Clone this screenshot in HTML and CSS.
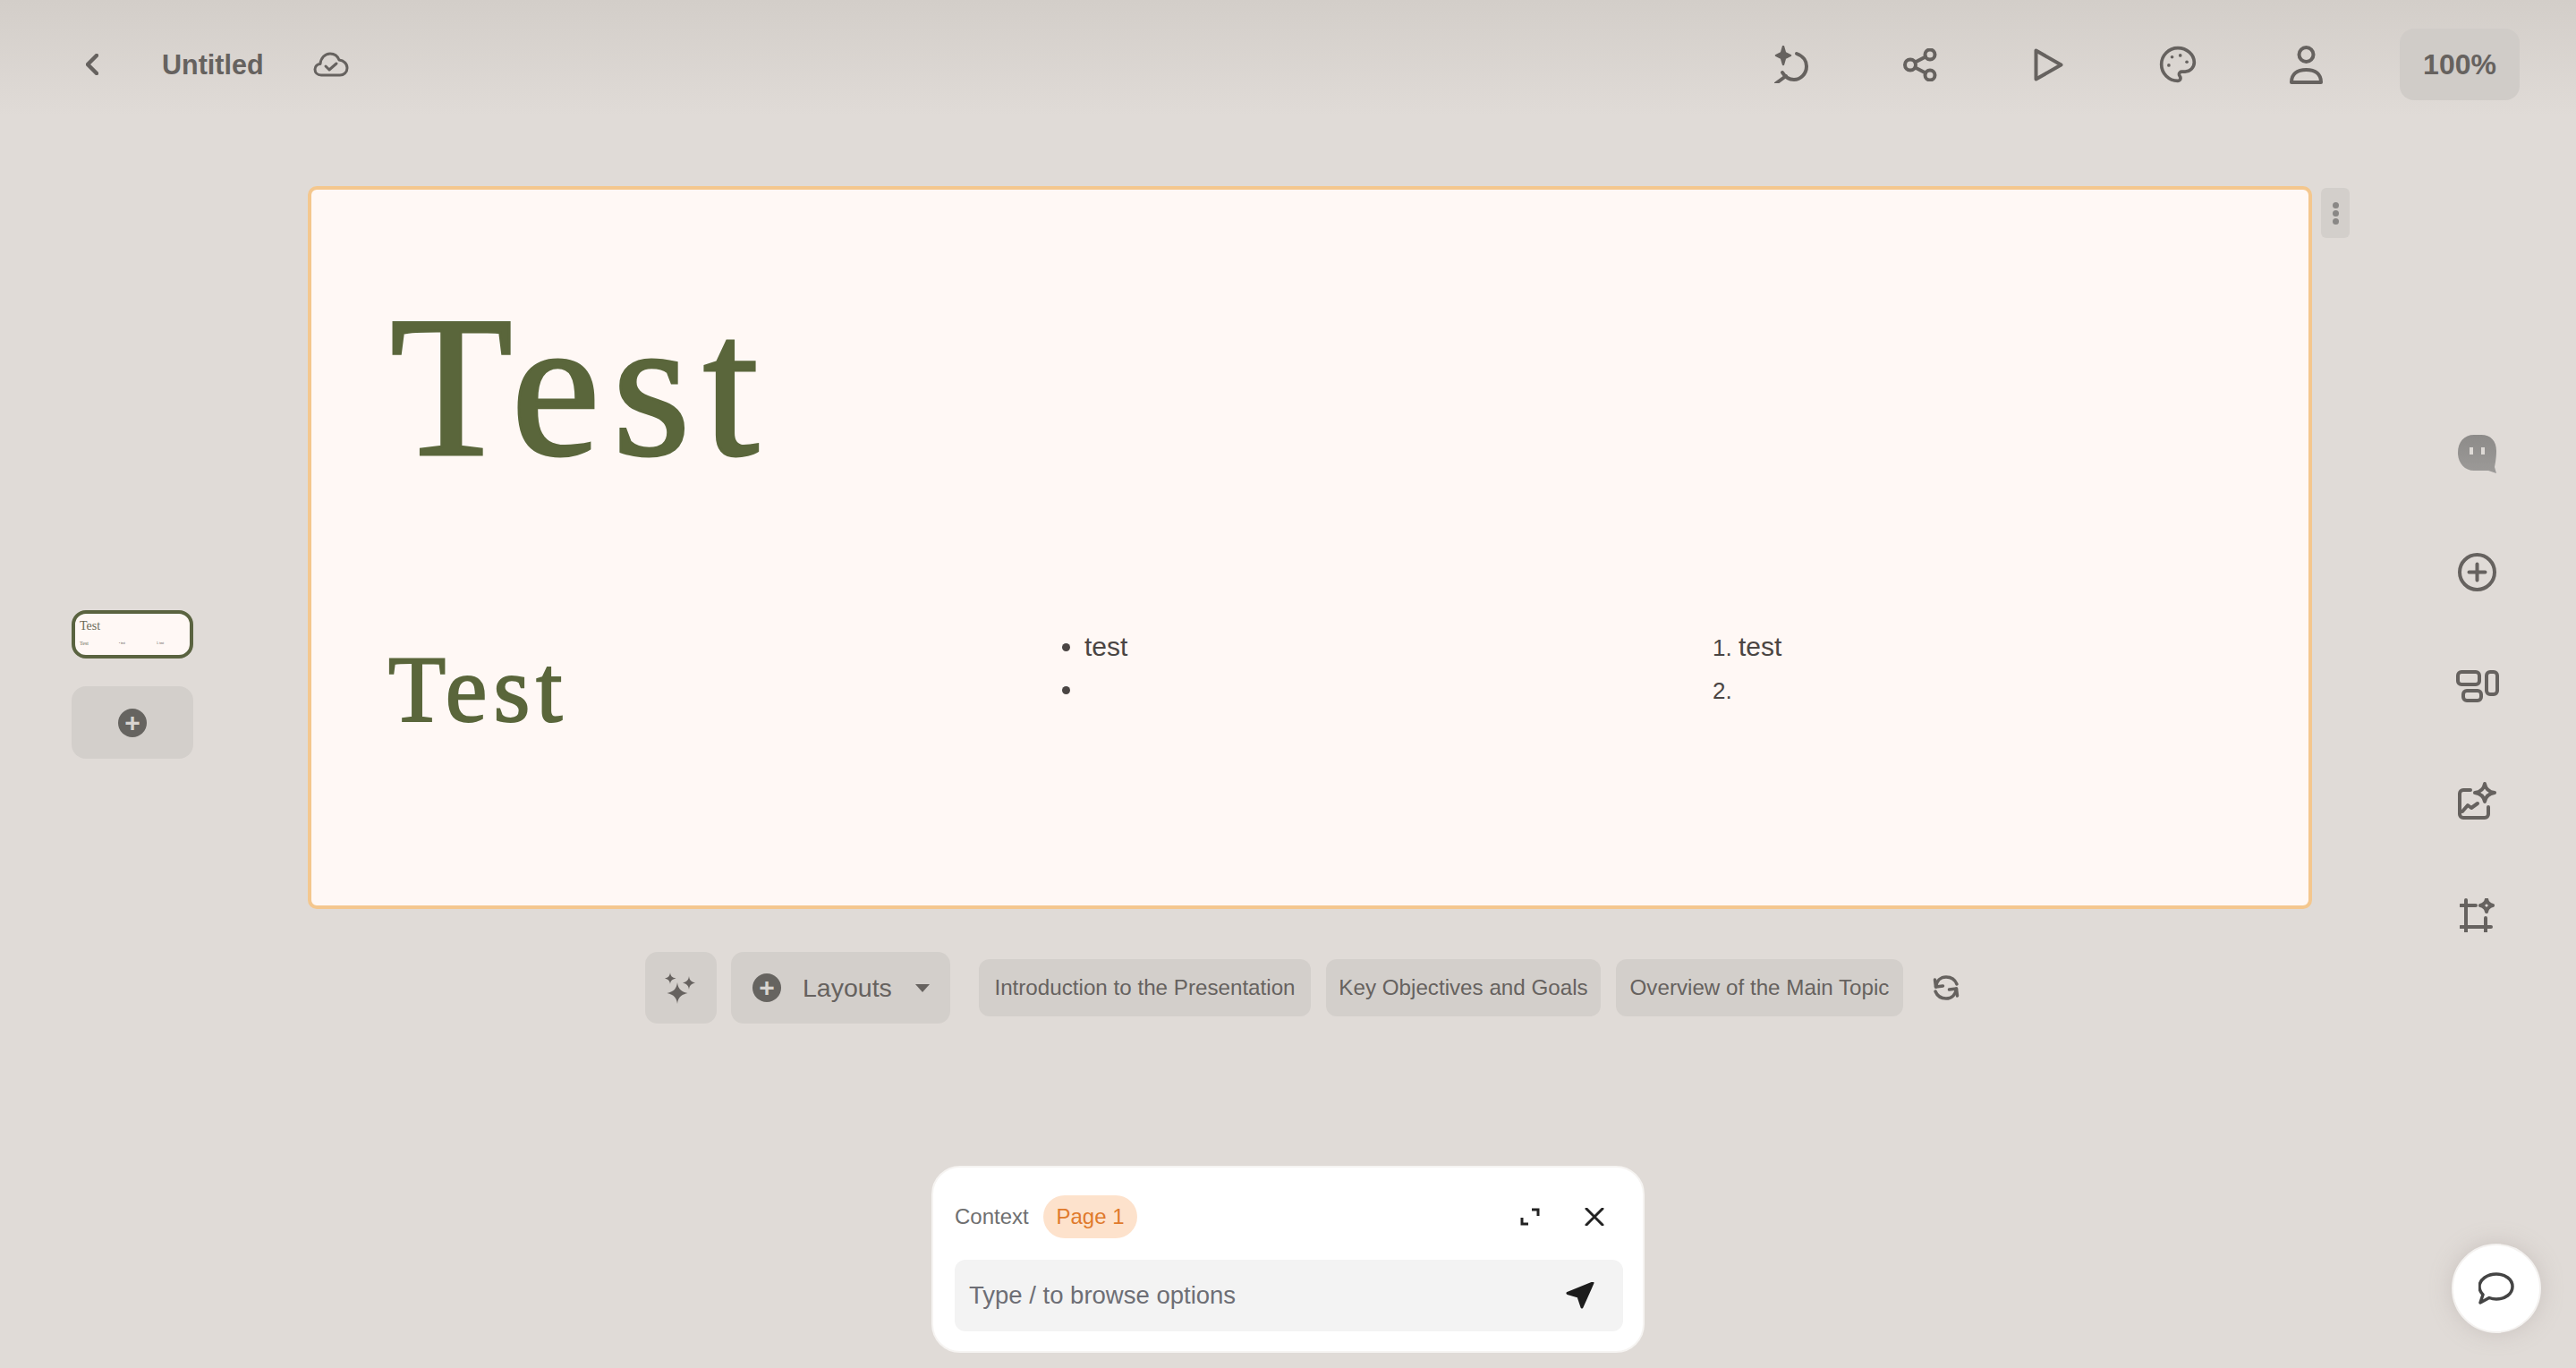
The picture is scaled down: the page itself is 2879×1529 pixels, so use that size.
FILE: index.html
```html
<!DOCTYPE html>
<html lang="en">
<head>
<meta charset="utf-8">
<title>Untitled</title>
<link rel="stylesheet" href="styles.css">
</head>
<body>
<div class="app">
  <header class="topbar">
    <div class="top-left">
      <svg class="i-back" viewBox="0 0 14 24"><polyline points="12,2 2,12 12,22"/></svg>
      <span class="doc-title">Untitled</span>
      <svg class="i-cloud" viewBox="0 0 40 28"><path d="M9 26C4.500 26 2 23 2 19.500 2 16 5 13.500 8 13.500 8.500 7 13 2 19 2c5 0 8.500 3 10 7 5 .5 9 4 9 9 0 5-4 8-8 8Z"/><path d="M14 16l4 4 8-7"/></svg>
    </div>
    <div class="top-right">
      <svg class="i-undo" viewBox="0 0 38 42"><path d="M25 9c8 3 11 9 11 14 0 9-7 15-14 15-6 0-10-3-13-8"/><path d="M13 34 2 42"/><path class="fill thin" d="M10 1l2 7 6 3-6 3-2 7-2-7-6-3 6-3Z"/></svg>
      <svg class="i-share" viewBox="0 0 38 37"><circle cx="8" cy="18.500" r="6"/><circle cx="30" cy="7" r="5.500"/><circle cx="30" cy="30" r="5.500"/><path d="M13.500 15.500 25 9.500M13.500 21.500 25 27.500"/></svg>
      <svg class="i-play" viewBox="0 0 33 37"><path d="M2.500 2.500v32l28-16Z"/></svg>
      <svg class="i-palette" viewBox="0 0 24 24"><path d="M12 2C6.500 2 2 6.500 2 12s4.500 10 10 10c.926 0 1.648-.746 1.648-1.688 0-.437-.18-.835-.437-1.125-.29-.289-.438-.652-.438-1.125a1.640 1.640 0 0 1 1.668-1.668h1.996c3.051 0 5.555-2.503 5.555-5.554C21.965 6.012 17.461 2 12 2z"/><circle class="fill dot" cx="13.500" cy="6.500" r="1"/><circle class="fill dot" cx="17.500" cy="10.500" r="1"/><circle class="fill dot" cx="8.500" cy="7.500" r="1"/><circle class="fill dot" cx="6.500" cy="12.500" r="1"/></svg>
      <svg class="i-user" viewBox="0 0 39 43"><circle cx="19.500" cy="10" r="8"/><path d="M3 41c0-9 6-14 16.500-14S36 32 36 41Z"/></svg>
      <div class="zoom-box">100%</div>
    </div>
  </header>

  <div class="workspace">
    <aside class="left-rail">
      <div class="thumb">
        <div class="thumb-title">Test</div>
        <div class="thumb-row">
          <span class="thumb-sub">Test</span>
          <span class="thumb-li">• test</span>
          <span class="thumb-li">1. test</span>
        </div>
      </div>
      <button class="add-page"><span class="plus-dot">+</span></button>
    </aside>

    <main class="center">
      <div class="slide-wrap">
        <section class="slide">
          <h1 class="slide-title">Test</h1>
          <div class="slide-cols">
            <h2 class="slide-sub">Test</h2>
            <ul class="slide-ul"><li>test</li><li></li></ul>
            <ol class="slide-ol"><li>test</li><li></li></ol>
          </div>
        </section>
        <div class="handle"><i></i><i></i><i></i></div>
      </div>
      <div class="toolbar">
        <button class="tool tool-spark">
          <svg class="i-spark" viewBox="0 0 36 36"><path d="M14 12c1 7 3.500 10 11.500 12C17.500 26 15 29 14 36c-1-7-3.500-10-11.500-12C10.500 22 13 19 14 12Z"/><path d="M6 1c.5 4 2 5.500 6.500 6.500C8 8.500 6.500 10 6 14c-.5-4-2-5.500-6-6.500C4 6.500 5.500 5 6 1Z"/><path d="M27 5c.5 4.500 2.500 6.500 7 7.500-4.500 1-6.500 3-7 7.500-.5-4.500-2.500-6.500-7-7.500 4.500-1 6.500-3 7-7.500Z"/></svg>
        </button>
        <button class="tool tool-layouts">
          <span class="plus-dot">+</span>
          <span class="tool-label">Layouts</span>
          <span class="caret"></span>
        </button>
        <div class="chips">
          <button class="chip chip-intro">Introduction to the Presentation</button>
          <button class="chip chip-key">Key Objectives and Goals</button>
          <button class="chip chip-over">Overview of the Main Topic</button>
          <svg class="i-refresh" viewBox="0 0 30 28"><path d="M3.500 13C4.500 6 9 2 15 2c6 0 10 3 12 8"/><path d="M2.500 5l1 8 8-1"/><path d="M26.500 15C25.500 22 21 26 15 26 9 26 5 23 3 18"/><path d="M27.500 23l-1-8-8 1"/></svg>
        </div>
      </div>
    </main>

    <aside class="right-rail">
      <div class="rail-slot first">
        <svg class="i-bubble" viewBox="0 0 44 43"><defs><linearGradient id="bubbleFill" x1="0" y1="0" x2="0" y2="1"><stop offset="0" stop-color="#8d8b89"/><stop offset="1" stop-color="#9c9a98"/></linearGradient></defs><path fill="url(#bubbleFill)" d="M18 0h8c11 0 17 7 17 18 0 7-1 13-2 18l2 7-9-3H18C7 40 0 31 0 20 0 8 7 0 18 0Z"/><rect x="13" y="14" width="4" height="8" fill="#dedad6"/><rect x="26" y="14" width="4" height="8" fill="#dedad6"/></svg>
      </div>
      <div class="rail-slot">
        <svg class="i-plus" viewBox="0 0 43 43"><circle cx="21.500" cy="21.500" r="19.500"/><path d="M21.500 12.500v18M12.500 21.500h18"/></svg>
      </div>
      <div class="rail-slot">
        <svg class="i-layout" viewBox="0 0 48 36"><rect x="2" y="2" width="24" height="14" rx="4"/><rect x="8" y="23" width="20" height="11" rx="4"/><rect x="34" y="2" width="12" height="25" rx="4"/></svg>
      </div>
      <div class="rail-slot">
        <svg class="i-chart" viewBox="0 0 43 42"><path d="M14 9H6a4 4 0 0 0-4 4v23a4 4 0 0 0 4 4h24a4 4 0 0 0 4-4v-8"/><path d="M5 33l6-7 4 3 7-5"/><path d="M30 2c1 6 4 9 11 10-7 1-10 4-11 10-1-6-4-9-11-10 7-1 10-4 11-10Z"/></svg>
      </div>
      <div class="rail-slot">
        <svg class="i-crop" viewBox="0 0 40 38"><path d="M7 2v36M1 8h17M1 32h34M29 22v16"/><path d="M30 1c.8 4 3 6.200 7 7-4 .8-6.200 3-7 7-.8-4-3-6.200-7-7 4-.8 6.200-3 7-7Z"/></svg>
      </div>
    </aside>
  </div>

  <section class="ai-panel">
    <div class="ai-head">
      <span class="ai-context">Context</span>
      <span class="ai-page">Page 1</span>
      <svg class="i-expand" viewBox="0 0 22 20"><path d="M13 2h7v7M2 11v7h7"/></svg>
      <svg class="i-close" viewBox="0 0 22 20"><path d="M2 1l18 18M20 1 2 19"/></svg>
    </div>
    <div class="ai-input">
      <span class="ai-placeholder">Type / to browse options</span>
      <svg class="i-send" viewBox="0 0 32 30"><path d="M30 1 2 12.500l12 3.500 4 12Z"/></svg>
    </div>
  </section>

  <button class="chat-fab">
    <svg class="i-chat" viewBox="0 0 40 36"><path d="M20 2c10 0 18 6 18 14s-8 14-18 14c-3 0-5.500-.5-8-1.500L2 34l3-9c-2.500-2.500-4-6-4-9C1 8 10 2 20 2Z"/></svg>
  </button>
</div>
</body>
</html>
```

FILE: styles.css
```css
* { box-sizing: border-box; }
html, body { margin: 0; padding: 0; }
body { font-family: "Liberation Sans", Arial, sans-serif; color: #66625f; overflow: hidden; }
button { font: inherit; color: inherit; border: 0; padding: 0; }
svg { display: block; flex: none; fill: none; stroke: #66625f; stroke-width: 4; stroke-linecap: round; stroke-linejoin: round; }
svg .fill { fill: #66625f; }
svg .thin { stroke-width: 2.500; }
svg .dot { stroke: none; }

.app {
  position: relative;
  width: 2879px;
  height: 1529px;
  overflow: hidden;
  background: linear-gradient(180deg, #d3cec9 0, #e0dbd7 130px, #e0dbd7 100%);
}

/* top bar */
.topbar { height: 144px; display: flex; justify-content: space-between; align-items: center; padding: 0 63px 0 96px; }
.top-left, .top-right { display: flex; align-items: center; }
.i-back { width: 14px; height: 24px; stroke-width: 4.500; }
.doc-title { margin-left: 71px; font-size: 30.500px; font-weight: 700; width: 169px; }
.i-cloud { width: 40px; height: 28px; stroke-width: 3; }
.i-undo { width: 38px; height: 42px; }
.i-share { width: 38px; height: 37px; margin-left: 106px; }
.i-play { width: 33px; height: 37px; margin-left: 108px; }
.i-palette { width: 44px; height: 44px; margin-left: 106px; stroke-width: 2; }
.i-user { width: 39px; height: 43px; margin-left: 102px; }
.zoom-box { margin-left: 85px; width: 134px; height: 80px; border-radius: 16px; background: #d0ccc8; display: flex; align-items: center; justify-content: center; font-size: 32px; font-weight: 700; }

/* workspace */
.workspace { display: grid; grid-template-columns: 344px 2240px 1fr; }
.left-rail { padding: 538px 0 0 80px; display: flex; flex-direction: column; gap: 31px; }
.thumb { width: 136px; height: 54px; border: 4px solid #5a6340; border-radius: 16px; background: #fff8f5; padding: 7px 5px; overflow: hidden; }
.thumb-title { font-family: "Liberation Serif", serif; font-size: 14px; line-height: 14px; color: #6b6a58; }
.thumb-row { display: flex; margin-top: 8px; align-items: center; gap: 14px; }
.thumb-sub { font-family: "Liberation Serif", serif; font-size: 6px; line-height: 8px; color: #6b6a58; width: 30px; }
.thumb-li { font-size: 3px; line-height: 6px; color: #4a4543; width: 28px; }
.add-page { width: 136px; height: 81px; border-radius: 16px; background: #d3cfcb; display: flex; align-items: center; justify-content: center; }
.plus-dot { width: 32px; height: 32px; border-radius: 50%; background: #666460; color: #d8d4d0; display: flex; align-items: center; justify-content: center; font-size: 30px; line-height: 32px; font-weight: 700; flex: none; }

/* slide */
.center { padding-top: 64px; }
.slide-wrap { position: relative; }
.slide { height: 808px; border: 4px solid #f4c78e; border-radius: 10px; background: #fff8f5; overflow: hidden; }
.slide-title { margin: 0; padding: 100px 0 0 88px; font-family: "Liberation Serif", serif; font-weight: 400; font-size: 224px; line-height: 240px; color: #5a663b; letter-spacing: 14px; -webkit-text-stroke: 3px #5a663b; }
.slide-cols { margin-top: 149px; display: grid; grid-template-columns: 755px 727px 1fr; padding-left: 85px; }
.slide-sub { margin: 0; padding: 10px 0 0 1px; font-family: "Liberation Serif", serif; font-weight: 400; font-size: 105px; line-height: 120px; color: #5a663b; letter-spacing: 7px; -webkit-text-stroke: 2px #5a663b; }
.slide-ul, .slide-ol { margin: -2px 0 0; font-size: 30px; line-height: 48px; color: #4a4543; }
.slide-ul { padding-left: 24px; }
.slide-ol { padding-left: 28px; }
.slide-ul li, .slide-ol li { min-height: 48px; }
.slide-ol li::marker { font-size: 26px; }
.handle { position: absolute; left: 2250px; top: 2px; width: 32px; height: 56px; border-radius: 6px; background: #d3cfcb; display: flex; flex-direction: column; align-items: center; justify-content: center; gap: 2px; }
.handle i { width: 7px; height: 7px; border-radius: 50%; background: #8a8886; }

/* toolbar */
.toolbar { display: flex; align-items: center; margin: 48px 0 0 377px; width: 1700px; }
.tool { height: 80px; border-radius: 14px; background: #d3cfcb; display: flex; align-items: center; }
.tool-spark { width: 80px; justify-content: center; }
.i-spark { width: 36px; height: 36px; fill: #66625f; stroke: none; }
.tool-layouts { width: 245px; margin-left: 16px; padding-left: 24px; }
.tool-label { margin-left: 24px; font-size: 28.500px; }
.caret { margin-left: 26px; width: 0; height: 0; border-left: 8px solid transparent; border-right: 8px solid transparent; border-top: 9px solid #66625f; }
.chips { display: flex; align-items: center; gap: 17px; margin-left: 32px; }
.chip { height: 64px; border-radius: 12px; background: #d3cfcb; font-size: 24.200px; white-space: nowrap; }
.chip-intro { width: 371px; }
.chip-key { width: 307px; }
.chip-over { width: 321px; }
.i-refresh { width: 30px; height: 28px; margin-left: 16px; stroke-width: 3.500; }

/* right rail */
.right-rail { display: flex; flex-direction: column; align-items: center; padding: 339px 0 0 74px; }
.rail-slot { height: 48px; margin-bottom: 80px; display: flex; align-items: center; justify-content: center; }
.rail-slot.first { margin-bottom: 84px; }
.i-bubble { width: 44px; height: 43px; stroke: none; }
.i-plus { width: 43px; height: 43px; }
.i-layout { width: 48px; height: 36px; }
.i-chart { width: 43px; height: 42px; }
.i-crop { width: 40px; height: 38px; }

/* AI panel */
.ai-panel { position: absolute; left: 1041px; top: 1303px; width: 797px; height: 209px; border-radius: 32px; background: #fff; border: 2px solid #f6f4f2; padding: 31px 22px 0 24px; }
.ai-head { display: flex; align-items: center; height: 48px; }
.ai-context { font-size: 24px; color: #6f6f70; width: 99px; }
.ai-page { width: 105px; height: 48px; border-radius: 24px; background: #fde2cc; color: #e07a2c; font-size: 24px; display: flex; align-items: center; justify-content: center; }
.i-expand { width: 22px; height: 20px; margin-left: 428px; stroke: #222; stroke-width: 3; stroke-linecap: butt; stroke-linejoin: miter; }
.i-close { width: 22px; height: 20px; margin-left: 50px; stroke: #222; stroke-width: 3; }
.ai-input { margin-top: 24px; height: 80px; border-radius: 12px; background: #f3f3f3; display: flex; align-items: center; justify-content: space-between; padding: 0 32px 0 16px; }
.ai-placeholder { font-size: 27.500px; color: #6d6e75; }
.i-send { width: 32px; height: 30px; fill: #1c1c1c; stroke: #1c1c1c; stroke-width: 3; }

/* chat */
.chat-fab { position: absolute; left: 2740px; top: 1390px; width: 100px; height: 100px; border-radius: 50%; background: #fff; box-shadow: 0 0 24px rgba(160,150,145,.35); border: 2px solid #f4f2f0; display: flex; align-items: center; justify-content: center; }
.i-chat { width: 40px; height: 36px; stroke: #444; stroke-width: 3.500; }
```
